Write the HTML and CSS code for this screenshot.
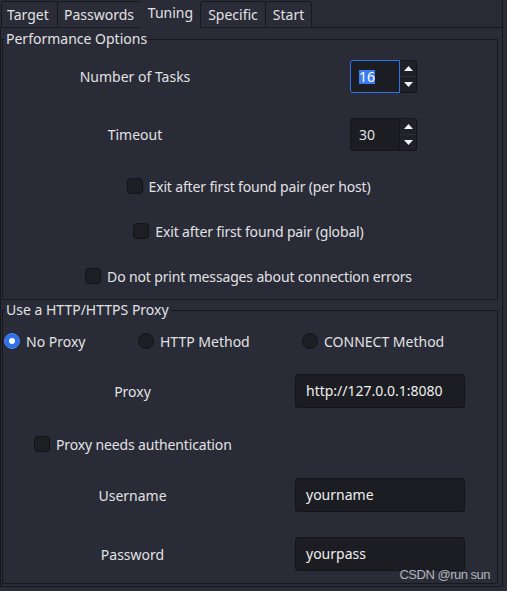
FILE: index.html
```html
<!DOCTYPE html>
<html>
<head>
<meta charset="utf-8">
<link rel="stylesheet" href="styles.css">
</head>
<body>
<div class="window">
  <div class="tabbar">
    <div class="tab t-target">Target</div>
    <div class="tab t-passwords">Passwords</div>
    <div class="tab active t-tuning">Tuning</div>
    <div class="tab t-specific">Specific</div>
    <div class="tab t-start">Start</div>
    <div class="tabfill"></div>
  </div>
  <div class="pane">
    <fieldset class="group perf">
      <legend>Performance Options</legend>
      <div class="form-row perf-row">
        <span class="label">Number of Tasks</span>
        <div class="spin focused">
          <div class="spin-field"><span class="sel">16</span></div>
          <div class="spin-btns">
            <div class="spin-btn"><svg width="9" height="5" viewBox="0 0 9 5"><polygon points="0,5 4.5,0 9,5" fill="#f2f2f2"/></svg></div>
            <div class="spin-btn"><svg width="9" height="5" viewBox="0 0 9 5"><polygon points="0,0 9,0 4.5,5" fill="#f2f2f2"/></svg></div>
          </div>
        </div>
      </div>
      <div class="form-row perf-row">
        <span class="label">Timeout</span>
        <div class="spin">
          <div class="spin-field"><span class="val">30</span></div>
          <div class="spin-btns">
            <div class="spin-btn"><svg width="9" height="5" viewBox="0 0 9 5"><polygon points="0,5 4.5,0 9,5" fill="#f2f2f2"/></svg></div>
            <div class="spin-btn"><svg width="9" height="5" viewBox="0 0 9 5"><polygon points="0,0 9,0 4.5,5" fill="#f2f2f2"/></svg></div>
          </div>
        </div>
      </div>
      <div class="check-row"><span class="box"></span><span class="cl">Exit after first found pair (per host)</span></div>
      <div class="check-row"><span class="box"></span><span class="cl">Exit after first found pair (global)</span></div>
      <div class="check-row"><span class="box"></span><span class="cl">Do not print messages about connection errors</span></div>
    </fieldset>
    <fieldset class="group proxy">
      <legend>Use a HTTP/HTTPS Proxy</legend>
      <div class="radio-row">
        <div class="radio-item"><span class="radio checked"></span><span>No Proxy</span></div>
        <div class="radio-item"><span class="radio"></span><span>HTTP Method</span></div>
        <div class="radio-item"><span class="radio"></span><span>CONNECT Method</span></div>
      </div>
      <div class="form-row proxy-row">
        <span class="label">Proxy</span>
        <div class="field">http://127.0.0.1:8080</div>
      </div>
      <div class="auth-row"><span class="box"></span><span class="cl">Proxy needs authentication</span></div>
      <div class="form-row proxy-row">
        <span class="label">Username</span>
        <div class="field">yourname</div>
      </div>
      <div class="form-row proxy-row">
        <span class="label">Password</span>
        <div class="field">yourpass</div>
      </div>
    </fieldset>
  </div>
  <div class="watermark">CSDN @run sun</div>
</div>
</body>
</html>
```
FILE: styles.css
```css
html, body {
  margin: 0;
  padding: 0;
  background: #292b37;
}
body {
  font-family: "Noto Sans", "Open Sans", sans-serif;
  font-size: 14px;
  color: #e2e2e4;
}
.window {
  width: 507px;
  height: 591px;
  overflow: hidden;
  position: relative;
  background: #292b37;
}
.tabbar {
  display: flex;
  align-items: flex-end;
  height: 28px;
  width: 503px;
  padding-left: 1px;
  box-sizing: border-box;
  background: #282a35;
}
.tab {
  flex: none;
  height: 27px;
  box-sizing: border-box;
  border: 1px solid #17181e;
  border-radius: 3px 3px 0 0;
  line-height: 25px;
  text-align: center;
  background: #2a2c38;
  margin-right: -1px;
}
.t-target { width: 57px; text-align: left; padding-left: 5px; }
.t-passwords { width: 84px; }
.t-tuning { width: 61px; }
.t-specific { width: 66px; }
.t-start { width: 47px; }
.tab.active {
  height: 28px;
  border-color: transparent;
  border-bottom: none;
  line-height: 23px;
  background: #292b37;
}
.tabfill {
  flex: 1;
  height: 28px;
  box-sizing: border-box;
  border-bottom: 1px solid #17181e;
  border-right: 1px solid #17181e;
  margin-left: 1px;
}
.pane {
  width: 503px;
  height: 559px;
  box-sizing: border-box;
  border: 1px solid #17181e;
  border-top: none;
  padding: 2px 0 0 1px;
}
.group {
  margin: 0;
  width: 496px;
  box-sizing: border-box;
  border: 1px solid #17181e;
  display: flex;
  flex-direction: column;
  min-width: 0;
}
.group legend {
  line-height: 18px;
  padding: 0 1px;
  margin-left: 2px;
}
.perf {
  padding: 12px 0 13px 0;
  gap: 25px;
}
.proxy {
  margin-top: 1px;
  padding: 12px 0 12px 0;
}
.form-row {
  display: grid;
  align-items: center;
}
.perf-row {
  grid-template-columns: 264px 1fr;
  height: 33px;
}
.proxy-row {
  grid-template-columns: 259px 1fr;
  height: 34px;
}
.label {
  justify-self: center;
}
.cl {
  letter-spacing: -0.15px;
}
.spin {
  display: flex;
  width: 67px;
  height: 33px;
  margin-left: 83px;
}
.spin-field {
  flex: 1;
  box-sizing: border-box;
  background: #1c1d23;
  border: 1px solid #15161b;
  border-radius: 3px 0 0 3px;
  display: flex;
  align-items: center;
  padding-left: 8px;
}
.spin.focused .spin-field {
  border-color: #2e73f0;
}
.sel {
  display: inline-block;
  background: #3b7cf4;
  color: #ffffff;
  height: 14px;
  line-height: 14px;
}
.spin-btns {
  width: 17px;
  box-sizing: border-box;
  display: flex;
  flex-direction: column;
  background: #202128;
  border: 1px solid #15161b;
  border-left: none;
  border-radius: 0 3px 3px 0;
}
.spin-btn {
  flex: 1;
  display: flex;
  align-items: center;
  justify-content: center;
}
.spin-btn + .spin-btn {
  border-top: 1px solid #2a2b33;
}
.check-row {
  display: flex;
  justify-content: center;
  align-items: center;
  gap: 6px;
  height: 20px;
  padding-right: 3px;
}
.box {
  width: 16px;
  height: 16px;
  box-sizing: border-box;
  background: #1e1f25;
  border: 1px solid #121317;
  border-radius: 4px;
}
.radio-row {
  display: grid;
  grid-template-columns: 134px 164px auto;
  padding-left: 1px;
  height: 20px;
  align-items: center;
}
.radio-item {
  display: flex;
  align-items: center;
  gap: 6px;
}
.radio {
  width: 16px;
  height: 16px;
  box-sizing: border-box;
  border-radius: 50%;
  background: #1e1f25;
  border: 1px solid #121317;
  display: flex;
  align-items: center;
  justify-content: center;
}
.radio.checked {
  background: #2f6fe8;
  border-color: #4a86f0;
}
.radio.checked::after {
  content: "";
  width: 6px;
  height: 6px;
  border-radius: 50%;
  background: #ffffff;
}
.radio-row + .proxy-row {
  margin-top: 23px;
}
.auth-row {
  display: flex;
  align-items: center;
  gap: 6px;
  height: 20px;
  padding-left: 31px;
  margin-top: 26px;
}
.auth-row + .proxy-row {
  margin-top: 24px;
}
.auth-row + .proxy-row + .proxy-row {
  margin-top: 25px;
}
.field {
  margin-left: 33px;
  width: 170px;
  height: 34px;
  box-sizing: border-box;
  background: #1c1d23;
  border: 1px solid #15161b;
  border-radius: 3px;
  padding-left: 10px;
  line-height: 32px;
  color: #eeeeee;
}
.watermark {
  position: absolute;
  right: 17px;
  top: 567px;
  font-family: "Liberation Sans", Arial, sans-serif;
  font-size: 13px;
  letter-spacing: -0.5px;
  color: #b4b5ba;
}
```
